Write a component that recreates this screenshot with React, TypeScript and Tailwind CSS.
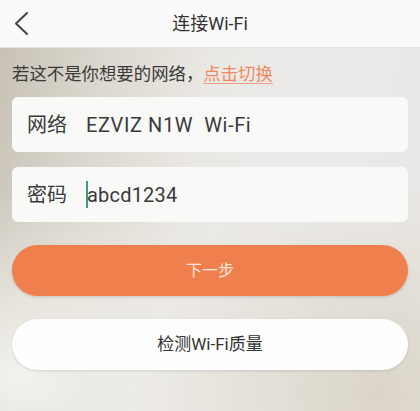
export default function App() {
  return (
    <div className="w-[420px] h-[411px] overflow-hidden flex flex-col font-['Roboto','Noto_Sans_CJK_SC',sans-serif] text-[#333]">
      {/* Header */}
      <div className="h-[48px] shrink-0 bg-[#fafafa] border-b border-[#e2e2e2] flex items-center relative">
        <svg className="absolute left-[12px] top-[10px]" width="20" height="28" viewBox="0 0 20 28" fill="none">
          <polyline points="15,3 4,13.5 15,24" stroke="#444" strokeWidth="2" strokeLinecap="round" strokeLinejoin="round" />
        </svg>
        <h1 className="flex-1 text-center text-[18px] leading-none text-[#333]">连接Wi-Fi</h1>
      </div>

      {/* Blurred background body */}
      <div className="flex-1 bg-[radial-gradient(ellipse_at_90%_95%,#dcd6c9_0%,transparent_45%),radial-gradient(ellipse_at_5%_90%,#f2f1ec_0%,transparent_40%),linear-gradient(100deg,#c8c2b6_0%,#dcd8cf_22%,#ebe9e5_45%,#ecebea_70%,#e9e7e4_100%)] px-[12px] pt-[15px]">
        <p className="text-[17.4px] leading-[22px] text-[#3a3a3a]">
          若这不是你想要的网络，
          <span className="text-[#ef8a60] underline underline-offset-[3px] decoration-[#f0a080]">点击切换</span>
        </p>

        <div className="mt-[12px] flex flex-col gap-[15px]">
          <div className="h-[55px] rounded-[6px] bg-[#f9f9f8] flex items-center px-[15px] text-[20px] text-[#3a3a3a]">
            <span>网络</span>
            <span className="ml-[19px] tracking-[0.6px]">EZVIZ N1W&nbsp;&nbsp;Wi-Fi</span>
          </div>
          <div className="h-[55px] rounded-[6px] bg-[#f9f9f8] flex items-center px-[15px] text-[20px] text-[#3a3a3a]">
            <span>密码</span>
            <span className="ml-[19px] w-[2px] h-[27px] bg-[#3f9c83]" />
            <span className="-ml-[1px] tracking-[0.2px]">abcd1234</span>
          </div>
        </div>

        <button className="mt-[23px] w-full h-[51px] rounded-full bg-[#f07f4e] text-[#fde6da] text-[16px] shadow-[0_1px_3px_rgba(0,0,0,0.15)]">
          下一步
        </button>
        <button className="mt-[23px] w-full h-[51px] rounded-full bg-[#fefefe] text-[#333] text-[17px] shadow-[0_1px_3px_rgba(0,0,0,0.12)]">
          检测Wi-Fi质量
        </button>
      </div>
    </div>
  );
}
